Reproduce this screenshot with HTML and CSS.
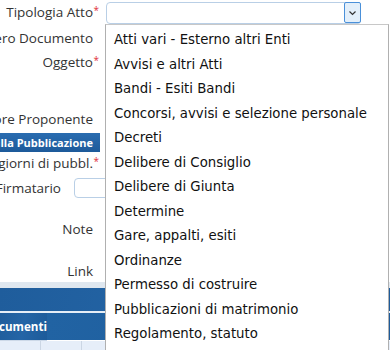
FILE: index.html
```html
<!DOCTYPE html>
<html lang="it">
<head>
  <meta charset="UTF-8" />
  <title>Atto</title>
  <link rel="stylesheet" href="styles.css">
</head>
<body>

<div class="form">
  <div class="row row-top">
    <div class="lbl">Tipologia Atto<span class="req">*</span></div>
    <div class="select">
      <span class="select-btn">
        <svg width="9" height="6" viewBox="0 0 9 6"><path d="M1.5 1.5l3 3 3-3" fill="none" stroke="#333" stroke-width="1.2"/></svg>
      </span>
    </div>
  </div>
  <div class="row row-std">
    <div class="lbl">Numero Documento</div>
  </div>
  <div class="row row-area">
    <div class="lbl">Oggetto<span class="req">*</span></div>
  </div>
  <div class="row row-std">
    <div class="lbl">Settore Proponente</div>
  </div>
  <div class="section"><span>Dati relativi alla Pubblicazione</span></div>
  <div class="row row-tight">
    <div class="lbl">N. giorni di pubbl.<span class="req">*</span></div>
  </div>
  <div class="row row-tight">
    <div class="lbl lbl-short">Firmatario</div>
    <div class="small-input"></div>
  </div>
  <div class="row row-note">
    <div class="lbl">Note</div>
  </div>
  <div class="row row-link">
    <div class="lbl">Link</div>
  </div>
  <div class="strip"></div>
  <div class="bar"></div>
  <div class="bar bar-title"><span>Documenti</span></div>
  <div class="grid-head">
    <span></span><span></span><span></span>
  </div>
</div>

<ul class="dropdown">
  <li>Atti vari - Esterno altri Enti</li>
  <li>Avvisi e altri Atti</li>
  <li>Bandi - Esiti Bandi</li>
  <li>Concorsi, avvisi e selezione personale</li>
  <li>Decreti</li>
  <li>Delibere di Consiglio</li>
  <li>Delibere di Giunta</li>
  <li>Determine</li>
  <li>Gare, appalti, esiti</li>
  <li>Ordinanze</li>
  <li>Permesso di costruire</li>
  <li>Pubblicazioni di matrimonio</li>
  <li>Regolamento, statuto</li>
</ul>

</body>
</html>
```

FILE: styles.css
```css
body {
  margin: 0;
  background: #fff;
  font-family: "Open Sans", sans-serif;
  font-size: 13.5px;
  color: #333;
  overflow: hidden;
  height: 350px;
}
.form {
  width: 390px;
}
.row {
  display: flex;
  align-items: flex-start;
  box-sizing: border-box;
}
.lbl {
  display: flex;
  justify-content: flex-end;
  width: 100px;
  padding-right: 7px;
  box-sizing: border-box;
  flex: none;
  overflow: hidden;
  white-space: nowrap;
  line-height: 20px;
  position: relative;
}
.req {
  color: #e0303a;
  font-size: 10px;
  line-height: 10px;
  position: absolute;
  right: 1px;
  top: 3px;
}
.row-top {
  height: 26px;
  padding-top: 2px;
}
.select {
  margin-left: 6px;
  width: 255px;
  height: 22px;
  border: 1px solid #b9cfe6;
  border-radius: 4px 3px 3px 4px;
  display: flex;
  justify-content: flex-end;
  box-sizing: border-box;
}
.select-btn {
  width: 15px;
  height: 19px;
  border: 1px solid #4a90d9;
  background: #e3effa;
  border-radius: 2px;
  display: flex;
  align-items: center;
  justify-content: center;
  margin: -1px -1px 0 0;
}
.row-std {
  height: 25px;
  padding-top: 2px;
}
.row-area {
  height: 56px;
  padding-top: 1px;
}
.section {
  height: 19px;
  line-height: 19px;
  background: linear-gradient(#2a6cb0, #1d5a9a);
  color: #fff;
  font-weight: bold;
  font-size: 11px;
  white-space: nowrap;
  display: flex;
  justify-content: flex-end;
  width: 100px;
  padding-right: 7px;
  box-sizing: border-box;
  overflow: hidden;
  margin-top: 1px;
}
.row-tight {
  height: 25px;
  padding-top: 1px;
}
.lbl-short {
  width: 61px;
  padding-right: 0;
}
.small-input {
  margin-left: 13px;
  width: 40px;
  height: 20px;
  box-sizing: border-box;
  border: 1px solid #b9cfe6;
  border-radius: 4px;
}
.row-note {
  height: 42px;
  padding-top: 17px;
}
.row-link {
  height: 38px;
  padding-top: 17px;
}
.strip {
  height: 6px;
  background: #dfe7ef;
}
.bar {
  height: 25px;
  background: linear-gradient(100deg, #1f5d9c, #2465a6 50%, #1d5b9a);
  border-bottom: 2px solid #e6eef7;
  box-sizing: border-box;
}
.bar-title {
  height: 28px;
  line-height: 27px;
  color: #fff;
  font-weight: bold;
  font-size: 11.6px;
  white-space: nowrap;
  display: flex;
  justify-content: flex-end;
  width: 47px;
  overflow: hidden;
  border-bottom: 1px solid #cdd9e8;
}
.bar-title::after {
  content: "";
  position: absolute;
  left: 47px;
  right: 0;
  top: 313px;
  height: 27px;
  background: linear-gradient(100deg, #2163a3, #1d5b9a);
}
.grid-head {
  display: flex;
  height: 9px;
  background: #e6eef9;
}
.grid-head span {
  width: 40px;
  border-right: 1px solid #cbd6e4;
}
.dropdown {
  position: absolute;
  left: 105px;
  top: 24px;
  width: 284px;
  height: 330px;
  margin: 0;
  padding: 3px 0 0;
  list-style: none;
  background: #fff;
  border: 1px solid #b0b0b0;
  border-top-color: #c8c8c8;
  box-sizing: border-box;
  font-family: "DejaVu Sans", sans-serif;
  font-size: 13.3px;
  color: #111;
}
.dropdown li {
  height: 24.5px;
  line-height: 24.5px;
  padding-left: 8px;
  white-space: nowrap;
}
```
